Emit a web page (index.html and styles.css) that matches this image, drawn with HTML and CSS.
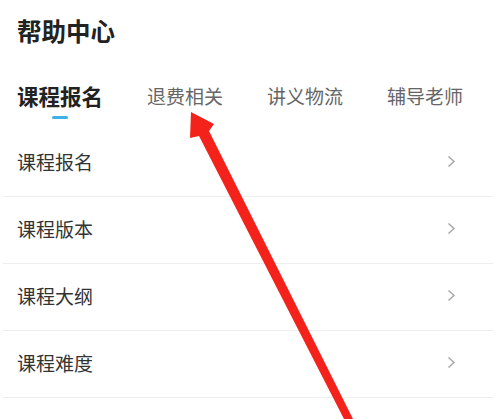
FILE: index.html
```html
<!DOCTYPE html>
<html lang="zh-CN">
<head>
  <meta charset="UTF-8">
  <title>帮助中心</title>
  <link rel="stylesheet" href="styles.css">
</head>
<body>

  <!-- 标题 -->
  <div class="page-title">帮助中心</div>

  <!-- 分类标签 -->
  <div class="tabs">
    <div class="tab active">
      <span>课程报名</span>
      <i class="tab-line"></i>
    </div>
    <div class="tab"><span>退费相关</span></div>
    <div class="tab"><span>讲义物流</span></div>
    <div class="tab"><span>辅导老师</span></div>
  </div>

  <!-- 问题列表 -->
  <ul class="list">
    <li><span>课程报名</span><svg class="chevron" width="9" height="13" viewBox="0 0 9 13"><polyline points="1.5,1.5 7,6.5 1.5,11.5" /></svg></li>
    <li><span>课程版本</span><svg class="chevron" width="9" height="13" viewBox="0 0 9 13"><polyline points="1.5,1.5 7,6.5 1.5,11.5" /></svg></li>
    <li><span>课程大纲</span><svg class="chevron" width="9" height="13" viewBox="0 0 9 13"><polyline points="1.5,1.5 7,6.5 1.5,11.5" /></svg></li>
    <li><span>课程难度</span><svg class="chevron" width="9" height="13" viewBox="0 0 9 13"><polyline points="1.5,1.5 7,6.5 1.5,11.5" /></svg></li>
  </ul>

  <!-- 红色箭头标注 -->
  <svg class="arrow" width="500" height="419" viewBox="0 0 500 419">
    <polygon points="191,112 214,124 209,131 353,419 344,419 199,136 190,138" />
  </svg>

</body>
</html>
```

FILE: styles.css
```css
* {
  margin: 0;
  padding: 0;
  box-sizing: border-box;
}

body {
  font-family: 'Noto Sans CJK SC', 'Noto Sans', sans-serif;
  background: #fff;
  color: #333;
  width: 500px;
  height: 419px;
  overflow: hidden;
  position: relative;
}

.page-title {
  padding: 13px 0 0 17px;
  height: 49px;
  line-height: 36px;
  font-size: 24.5px;
  font-weight: bold;
  color: #222;
}

.tabs {
  display: flex;
  gap: 44px;
  padding: 32px 0 0 17px;
}

.tab {
  display: flex;
  flex-direction: column;
  align-items: center;
  font-size: 19px;
  line-height: 30px;
  color: #666;
}

.tab.active {
  font-size: 21.5px;
  font-weight: bold;
  color: #222;
}

.tab-line {
  display: block;
  width: 16px;
  height: 3px;
  margin-top: 5px;
  border-radius: 2px;
  background: #3fb1e8;
}

.list {
  list-style: none;
  margin: 11px 7px 0 3px;
}

.list li {
  display: flex;
  justify-content: space-between;
  align-items: center;
  height: 67px;
  padding: 0 37px 4px 14px;
  border-bottom: 1px solid #eeeeee;
  font-size: 19px;
  color: #333;
}

.chevron polyline {
  fill: none;
  stroke: #a8a8a8;
  stroke-width: 1.5;
}

.arrow {
  position: absolute;
  top: 0;
  left: 0;
}

.arrow polygon {
  fill: #f3231b;
}
```
